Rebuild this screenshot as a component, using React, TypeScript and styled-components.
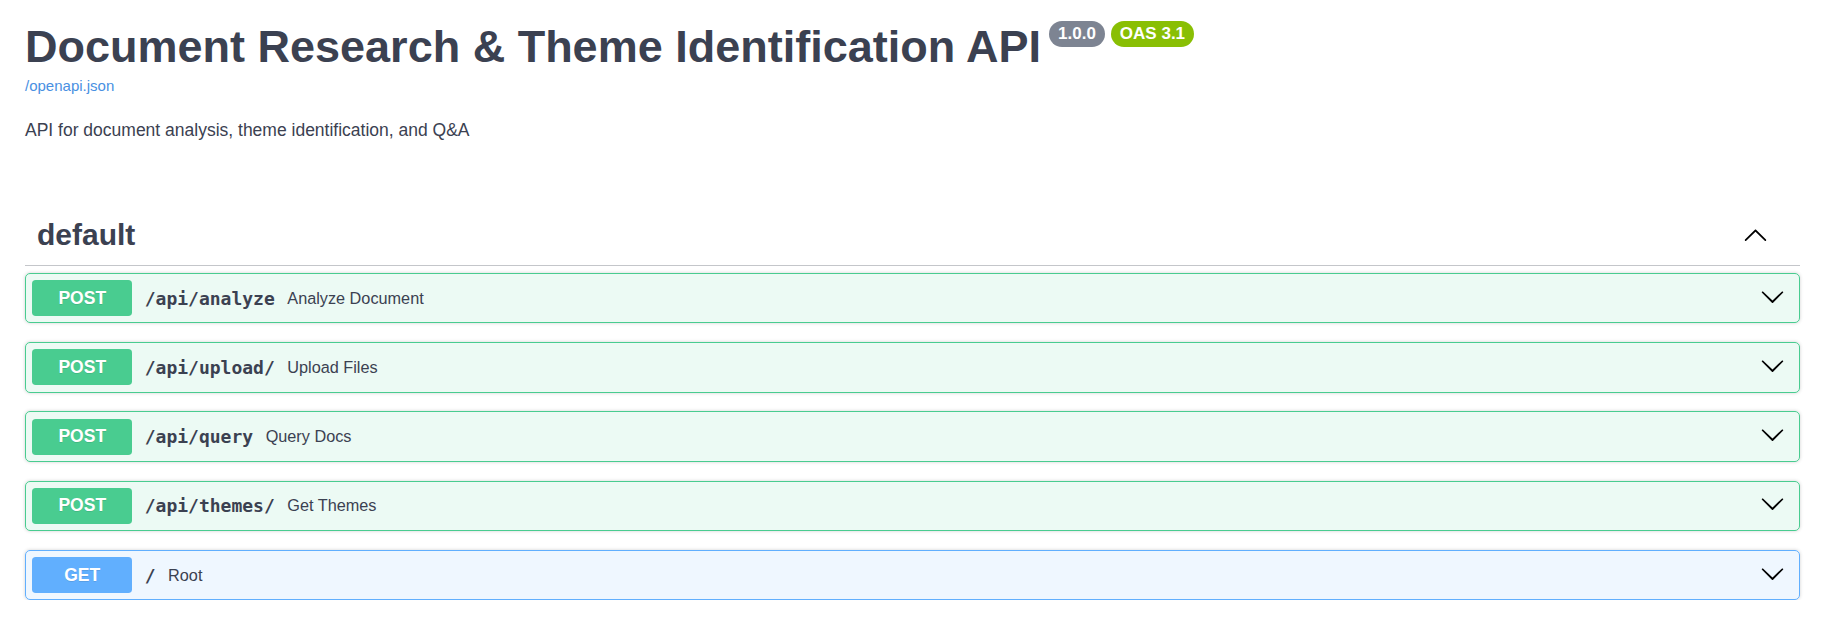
import styled, { createGlobalStyle } from 'styled-components';

const GlobalStyle = createGlobalStyle`
  body {
    margin: 0;
    background: #ffffff;
    font-family: 'Liberation Sans', Arial, sans-serif;
    color: #3b4151;
  }
`;

const Wrapper = styled.div`
  padding: 0 36px 0 25px;
`;

const Info = styled.div`
  padding-top: 24px;
  margin-bottom: 65px;
`;

const Title = styled.h2`
  display: flex;
  align-items: flex-start;
  gap: 6px;
  margin: 0;
  height: 45px;
`;

const TitleText = styled.span`
  font-size: 45px;
  line-height: 45px;
  font-weight: 700;
  color: #3b4151;
  margin-right: 2px;
`;

const Badge = styled.span<{ $color: string }>`
  margin-top: -3px;
  height: 26px;
  line-height: 26px;
  padding: 0 9px;
  border-radius: 57px;
  background: ${(p) => p.$color};
  color: #ffffff;
  font-size: 17px;
  font-weight: 700;
`;

const SpecLink = styled.a`
  display: block;
  width: fit-content;
  margin-top: 9px;
  font-size: 15px;
  line-height: 15px;
  color: #4990e2;
  text-decoration: none;
`;

const Description = styled.p`
  margin: 29px 0 0;
  font-size: 17.5px;
  line-height: 17.5px;
  color: #3b4151;
`;

const TagHeader = styled.div`
  display: flex;
  align-items: center;
  justify-content: space-between;
  padding: 12.5px 32px 12.5px 12px;
  border-bottom: 1px solid rgba(59, 65, 81, 0.3);
  margin-bottom: 7.3px;
`;

const TagName = styled.h3`
  margin: 0;
  font-size: 30px;
  line-height: 35px;
  font-weight: 700;
  color: #3b4151;
`;

const Operations = styled.div`
  display: flex;
  flex-direction: column;
  gap: 18.75px;
`;

const methodColors = {
  POST: { main: '#49cc90', bg: 'rgba(73, 204, 144, 0.1)' },
  GET: { main: '#61affe', bg: 'rgba(97, 175, 254, 0.1)' },
};

type Method = keyof typeof methodColors;

const Opblock = styled.div<{ $method: Method }>`
  display: flex;
  align-items: center;
  padding: 6.25px 6px 6.25px 6.25px;
  border: 1px solid ${(p) => methodColors[p.$method].main};
  background: ${(p) => methodColors[p.$method].bg};
  border-radius: 5px;
  box-shadow: 0 0 3.75px rgba(0, 0, 0, 0.19);
`;

const MethodBadge = styled.span<{ $method: Method }>`
  min-width: 100px;
  padding: 7.5px 0;
  line-height: 21px;
  text-align: center;
  font-size: 17.5px;
  font-weight: 700;
  color: #ffffff;
  text-shadow: 0 1px 0 rgba(0, 0, 0, 0.1);
  background: ${(p) => methodColors[p.$method].main};
  border-radius: 3.75px;
`;

const Path = styled.span`
  padding: 0 12.5px;
  font-family: 'DejaVu Sans Mono', 'Liberation Mono', monospace;
  font-size: 18px;
  font-weight: 700;
  color: #3b4151;
`;

const Summary = styled.span`
  flex: 1;
  font-size: 16.25px;
  color: #3b4151;
`;

const ArrowButton = styled.button`
  display: flex;
  align-items: center;
  border: none;
  background: none;
  padding: 0 8px 4px 12px;
  cursor: pointer;
`;

const ChevronDown = () => (
  <svg width="25" height="25" viewBox="0 0 20 20" fill="#000">
    <path d="M17.418 6.109c.272-.268.709-.268.979 0s.271.701 0 .969l-7.908 7.83c-.27.268-.707.268-.979 0l-7.908-7.83c-.27-.268-.27-.701 0-.969.271-.268.709-.268.979 0L10 13.25l7.418-7.141z" />
  </svg>
);

const ChevronUp = () => (
  <svg width="25" height="25" viewBox="0 0 20 20" fill="#000">
    <path d="M17.418 14.908c.272.268.709.268.979 0s.271-.701 0-.969l-7.908-7.83c-.27-.268-.707-.268-.979 0l-7.908 7.830c-.27.268-.27.701 0 .969.271.268.709.268.979 0L10 7.767l7.418 7.141z" />
  </svg>
);

const operations: { method: Method; path: string; summary: string }[] = [
  { method: 'POST', path: '/api/analyze', summary: 'Analyze Document' },
  { method: 'POST', path: '/api/upload/', summary: 'Upload Files' },
  { method: 'POST', path: '/api/query', summary: 'Query Docs' },
  { method: 'POST', path: '/api/themes/', summary: 'Get Themes' },
  { method: 'GET', path: '/', summary: 'Root' },
];

export default function App() {
  return (
    <>
      <GlobalStyle />
      <Wrapper>
        <Info>
          <Title>
            <TitleText>Document Research &amp; Theme Identification API</TitleText>
            <Badge $color="#7d8492">1.0.0</Badge>
            <Badge $color="#89bf04">OAS 3.1</Badge>
          </Title>
          <SpecLink href="#">/openapi.json</SpecLink>
          <Description>API for document analysis, theme identification, and Q&amp;A</Description>
        </Info>

        <TagHeader>
          <TagName>default</TagName>
          <ChevronUp />
        </TagHeader>

        <Operations>
          {operations.map((op) => (
            <Opblock key={op.path} $method={op.method}>
              <MethodBadge $method={op.method}>{op.method}</MethodBadge>
              <Path>{op.path}</Path>
              <Summary>{op.summary}</Summary>
              <ArrowButton>
                <ChevronDown />
              </ArrowButton>
            </Opblock>
          ))}
        </Operations>
      </Wrapper>
    </>
  );
}
